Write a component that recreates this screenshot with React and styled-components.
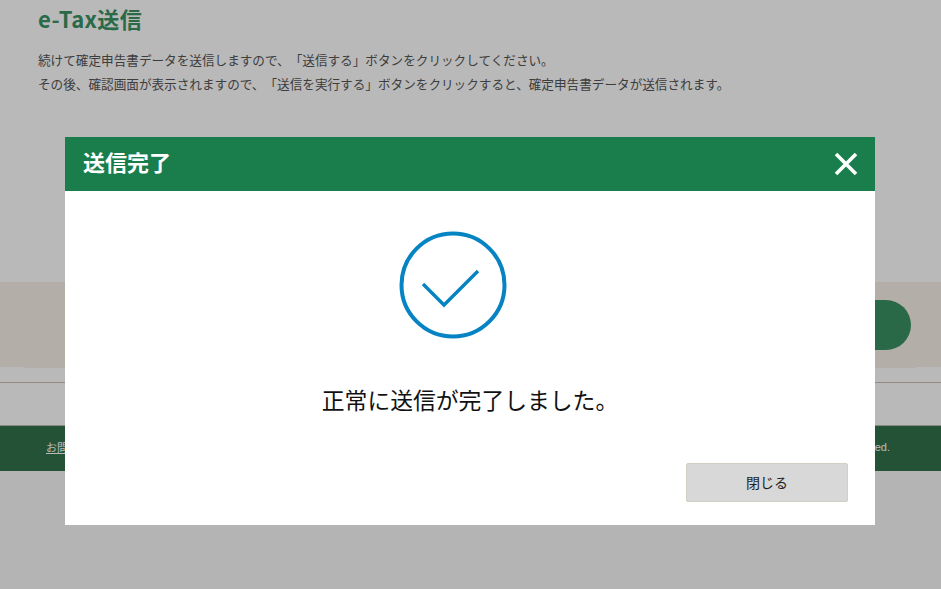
import React from "react";
import styled, { createGlobalStyle } from "styled-components";

const Global = createGlobalStyle`
  html, body { margin: 0; padding: 0; height: 100%; background: #f9f9f9; overflow: hidden; }
  body { font-family: "Noto Sans CJK JP", "Liberation Sans", sans-serif; text-spacing-trim: space-all; }
`;

const Page = styled.div`
  width: 941px;
  height: 589px;
  background: #f9f9f9;
  overflow: hidden;
`;
const Content = styled.div`
  background: #fff;
  overflow: hidden;
`;
const Main = styled.main`
  height: 282px;
  padding: 5px 38px 0;
  box-sizing: border-box;
`;
const Heading = styled.h1`
  margin: 0 0 17px;
  font-size: 22px;
  line-height: 26px;
  letter-spacing: 0.4px;
  font-weight: 700;
  color: #3b9264;
`;
const Lead = styled.p`
  margin: 0;
  font-size: 12.62px;
  line-height: 24px;
  color: #555;
`;
const ActionBand = styled.section`
  position: relative;
  height: 85px;
  background: #f7f2e8;
  display: flex;
  justify-content: flex-end;
  align-items: center;
  padding: 1px 30px 0;
  box-sizing: border-box;
  &::after {
    content: "";
    position: absolute;
    left: 25px;
    right: 25px;
    bottom: -1px;
    height: 1px;
    background: #f7f2e8;
  }
`;
const SendButton = styled.div`
  width: 300px;
  height: 50px;
  border-radius: 25px;
  background: #3a9162;
`;
const Rule = styled.hr`
  margin: 15px 0 42px;
  border: 0;
  border-top: 1px solid #c8c0b5;
`;
const Footer = styled.footer`
  height: 46px;
  background: #32714d;
  border-top: 1px solid #bdbdb5;
  display: flex;
  justify-content: space-between;
  align-items: center;
  padding: 0 51px 4px 46px;
  box-sizing: border-box;
  font-size: 11px;
  color: #fff;
`;
const FooterLink = styled.a`
  color: #fff;
  text-decoration: underline;
`;
const Copy = styled.span`
  font-family: "Liberation Sans", sans-serif;
`;
const Overlay = styled.div`
  position: fixed;
  inset: 0;
  background: rgba(0, 0, 0, 0.275);
  display: flex;
  justify-content: center;
  align-items: flex-start;
  padding: 137px 1px 0 0;
  box-sizing: border-box;
`;
const Modal = styled.div`
  width: 810px;
  height: 388px;
  background: #fff;
  display: flex;
  flex-direction: column;
`;
const ModalHeader = styled.header`
  height: 54px;
  flex: none;
  background: #197e4c;
  display: flex;
  align-items: center;
  justify-content: space-between;
  padding: 0 18px;
  box-sizing: border-box;
`;
const ModalTitle = styled.h2`
  margin: -6px 0 0;
  font-size: 22px;
  font-weight: 700;
  color: #fff;
`;
const CloseIcon = styled.svg`
  width: 24px;
  height: 24px;
  display: block;
  margin-right: -1px;
`;
const ModalBody = styled.div`
  flex: 1;
  display: flex;
  flex-direction: column;
  align-items: center;
  padding-top: 39px;
`;
const CheckIcon = styled.svg`
  width: 110px;
  height: 110px;
  display: block;
  margin-right: 35px;
`;
const Message = styled.p`
  margin: 44px 0 0;
  font-size: 22.8px;
  line-height: 32px;
  color: #111;
`;
const ModalFooter = styled.div`
  align-self: flex-end;
  margin: 47px 27px 0 0;
`;
const CloseButton = styled.button`
  width: 162px;
  height: 39px;
  background: #d8d8d8;
  border: 1px solid #d2cec4;
  border-radius: 2px;
  font-family: inherit;
  font-size: 14px;
  line-height: 34px;
  color: #222;
  padding: 0 0 2px;
`;

export default function App() {
  return (
    <Page>
      <Global />
      <Content>
        <Main>
          <Heading>e-Tax送信</Heading>
          <Lead>
            続けて確定申告書データを送信しますので、「送信する」ボタンをクリックしてください。
            <br />
            その後、確認画面が表示されますので、「送信を実行する」ボタンをクリックすると、確定申告書データが送信されます。
          </Lead>
        </Main>
        <ActionBand>
          <SendButton />
        </ActionBand>
        <Rule />
      </Content>
      <Footer>
        <FooterLink>お問い合わせ</FooterLink>
        <Copy>Copyright (C) NATIONAL TAX AGENCY All Rights Reserved.</Copy>
      </Footer>
      <Overlay>
        <Modal>
          <ModalHeader>
            <ModalTitle>送信完了</ModalTitle>
            <CloseIcon viewBox="0 0 24 24">
              <path d="M2 2 L22 22 M22 2 L2 22" stroke="#fff" strokeWidth="3.6" fill="none" />
            </CloseIcon>
          </ModalHeader>
          <ModalBody>
            <CheckIcon viewBox="0 0 110 110">
              <circle cx="55" cy="55" r="51.5" stroke="#0683c2" strokeWidth="4" fill="none" />
              <path d="M25 54 L46 75 L80 41" stroke="#0683c2" strokeWidth="3.4" fill="none" />
            </CheckIcon>
            <Message>正常に送信が完了しました。</Message>
            <ModalFooter>
              <CloseButton>閉じる</CloseButton>
            </ModalFooter>
          </ModalBody>
        </Modal>
      </Overlay>
    </Page>
  );
}
